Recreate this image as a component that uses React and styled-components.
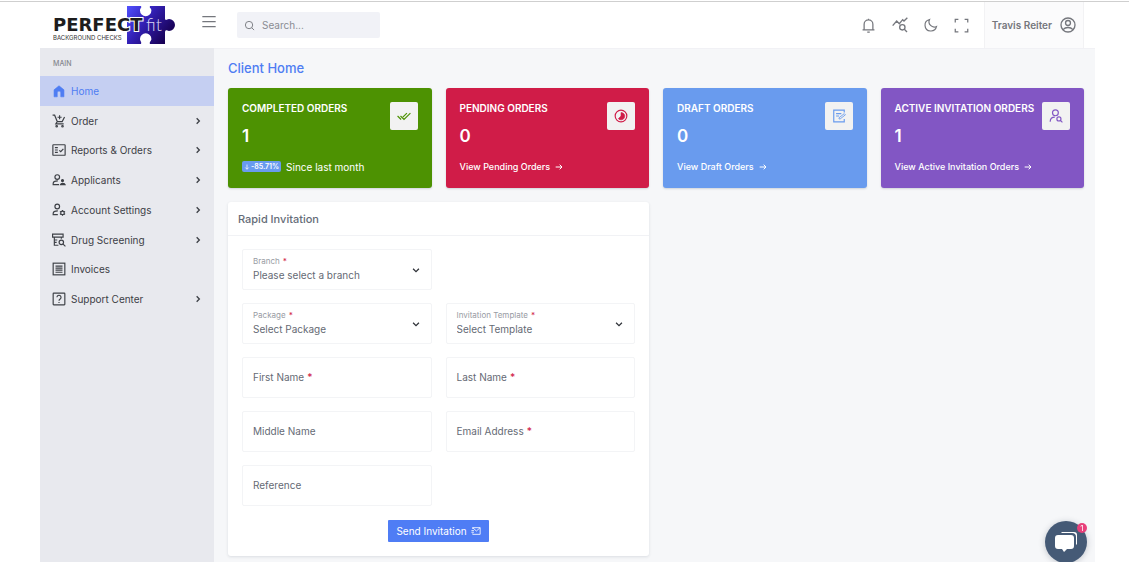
import React from "react";
import styled, { createGlobalStyle } from "styled-components";

const GlobalStyle = createGlobalStyle`
  *, *::before, *::after { box-sizing: border-box; }
  body {
    margin: 0;
    background: #fff;
    color: #3d4148;
    font-family: Inter, "Liberation Sans", sans-serif;
    font-size: 10px;
    line-height: 14px;
  }
  button, input, select { font: inherit; color: inherit; }
  h1, h2, h3, p, ul { margin: 0; padding: 0; }
  a { color: inherit; text-decoration: none; }
`;

const Page = styled.div`
  display: flex;
  flex-direction: column;
  min-height: 100vh;
  padding: 0 34px 0 40px;
`;

const TopLine = styled.div`
  height: 2px;
  margin: 0 -34px 0 -40px;
  border-bottom: 1px solid #cfcfcf;
`;

const Header = styled.header`
  display: flex;
  align-items: center;
  height: 46px;
  padding: 0 11px 0 13px;
`;

const LogoLink = styled.a`
  display: block;
  width: 124px;
  height: 40px;
`;

const IconButton = styled.button`
  display: grid;
  place-items: center;
  width: 16px;
  height: 16px;
  padding: 0;
  border: 0;
  background: none;
  color: #75777d;
`;

const MenuButton = styled(IconButton)`
  margin: 0 20px 6px 24px;
`;

const SearchBox = styled.label`
  display: flex;
  align-items: center;
  gap: 7px;
  width: 143px;
  height: 26px;
  padding: 0 7px;
  border-radius: 2px;
  background: #f1f2f7;
  color: #75777d;
`;

const SearchInput = styled.input`
  min-width: 0;
  flex: 1;
  padding: 0;
  border: 0;
  outline: 0;
  background: none;
  &::placeholder { color: #8a8c93; opacity: 1; }
`;

const Tools = styled.div`
  display: flex;
  align-items: center;
  gap: 15px;
  margin-left: auto;
  padding-right: 14px;
`;

const UserButton = styled.button`
  display: flex;
  align-items: center;
  align-self: stretch;
  gap: 8px;
  padding: 0 7px;
  border: 0;
  border-left: 1px solid #f2f2f4;
  border-right: 1px solid #f2f2f4;
  background: #fbfbfc;
  color: #75777d;
  font-weight: 600;
`;

const Body = styled.div`
  display: flex;
  flex: 1;
`;

const Sidebar = styled.nav`
  flex: 0 0 174px;
  background: #e8e9ee;
`;

const NavTitle = styled.h2`
  height: 28px;
  padding: 2px 13px 0;
  color: #85878d;
  font-size: 7px;
  font-weight: 500;
  line-height: 28px;
`;

const NavList = styled.ul`
  display: grid;
  grid-auto-rows: 1fr;
  height: 238px;
  list-style: none;
`;

const NavLink = styled.a`
  display: flex;
  align-items: center;
  gap: 5px;
  height: 100%;
  padding: 0 12px;
  background: ${(p) => (p.$active ? "#c5cff2" : "transparent")};
  color: ${(p) => (p.$active ? "#4f7df3" : "#3d4046")};
`;

const NavText = styled.span`
  flex: 1;
`;

const Main = styled.main`
  flex: 1;
  min-width: 0;
  padding: 10px 11px 6px 14px;
  background: #f6f7f9;
  border-top: 1px solid #f1f1f5;
`;

const PageTitle = styled.h1`
  margin-bottom: 11px;
  color: #4f7df3;
  font-size: 13px;
  font-weight: 500;
  line-height: 18px;
`;

const Grid = styled.div`
  display: grid;
  grid-template-columns: repeat(4, minmax(0, 1fr));
  gap: 14px;
`;

const StatCard = styled.section`
  display: flex;
  justify-content: space-between;
  height: 100px;
  padding: 14px;
  border-radius: 3px;
  background: ${(p) => p.$color};
  color: #fff;
  box-shadow: 0 1px 2px rgba(60, 70, 90, 0.2);
`;

const StatText = styled.div`
  display: flex;
  flex-direction: column;
  white-space: nowrap;
  min-width: 0;
`;

const StatTitle = styled.h2`
  font-size: 10px;
  font-weight: 600;
  line-height: 12px;
`;

const StatValue = styled.p`
  margin: 11px 0 12px;
  font-size: 17px;
  font-weight: 600;
  line-height: 22px;
`;

const StatFoot = styled.div`
  display: flex;
  align-items: center;
  gap: 5px;
  height: 18px;
`;

const StatLink = styled.a`
  display: flex;
  align-items: center;
  gap: 5px;
  font-size: 9px;
  font-weight: 500;
`;

const Trend = styled.span`
  display: flex;
  align-items: center;
  gap: 1px;
  height: 11px;
  padding: 0 2px;
  border-radius: 2px;
  background: #699bee;
  font-size: 7px;
  font-weight: 600;
  line-height: 11px;
`;

const StatIcon = styled.div`
  display: grid;
  place-items: center;
  flex: 0 0 28px;
  height: 28px;
  border-radius: 2px;
  background: #f2f2f2;
  color: ${(p) => p.$color};
`;

const FormCard = styled.form`
  grid-column: span 2;
  border-radius: 3px;
  background: #fff;
  box-shadow: 0 1px 3px rgba(60, 70, 90, 0.14);
`;

const FormTitle = styled.h2`
  height: 34px;
  padding: 0 10px;
  border-bottom: 1px solid #f1f2f5;
  color: #656c78;
  font-size: 11px;
  font-weight: 500;
  line-height: 34px;
`;

const Fields = styled.div`
  display: grid;
  grid-template-columns: repeat(2, minmax(0, 1fr));
  gap: 13px 14px;
  padding: 13px 14px 14px;
`;

const FieldBox = styled.div`
  display: grid;
  grid-column-start: ${(p) => (p.$first ? 1 : "auto")};
  position: relative;
  height: 41px;
  border: 1px solid #f3f4f6;
  border-radius: 2px;
  color: #656a74;
`;

const Control = styled.input`
  grid-area: 1 / 1;
  width: 100%;
  min-width: 0;
  padding: ${(p) => (p.as === "select" ? "11px 24px 0 10px" : "0 10px")};
  border: 0;
  background: transparent;
  appearance: none;
`;

const FieldLabel = styled.label`
  grid-area: 1 / 1;
  align-self: ${(p) => (p.$small ? "start" : "center")};
  padding: ${(p) => (p.$small ? "5px 10px 0" : "0 10px")};
  color: ${(p) => (p.$small ? "#989ba3" : "#656a74")};
  font-size: ${(p) => (p.$small ? "8px" : "10px")};
  line-height: 13px;
  pointer-events: none;
`;

const Star = styled.span`
  margin-left: 3px;
  color: #d11f4b;
  font-weight: 500;
`;

const FieldChevron = styled.span`
  position: absolute;
  top: 15px;
  right: 10px;
  display: flex;
  color: #2f3238;
  pointer-events: none;
`;

const FormActions = styled.div`
  display: flex;
  justify-content: center;
  padding-bottom: 14px;
`;

const SubmitButton = styled.button`
  display: flex;
  align-items: center;
  gap: 4px;
  height: 22px;
  padding: 0 8px;
  border: 0;
  border-radius: 1px;
  background: #4f7df5;
  color: #fff;
`;

const ChatButton = styled.button`
  position: fixed;
  right: 42px;
  bottom: -1px;
  display: grid;
  place-items: center;
  width: 42px;
  height: 42px;
  padding: 0;
  border: 0;
  border-radius: 50%;
  background: #455a76;
  color: #fff;
  box-shadow: 0 1px 6px rgba(40, 50, 70, 0.25);
`;

const ChatBadge = styled.span`
  position: absolute;
  top: 2px;
  right: 0;
  width: 10px;
  height: 10px;
  border-radius: 50%;
  background: #e8407a;
  font-size: 8px;
  line-height: 10px;
  text-align: center;
`;

const shapes = {
  menu: <path d="M2 4h20M2 11.500h20M2 19h20" />,
  search: <><circle cx="11" cy="11" r="8" /><path d="m17 17 5 5" /></>,
  bell: <path d="M5 19V10a7 7 0 0 1 14 0v9M2.500 19h19M12 3V1M10 22.500h4" />,
  stats: <><path d="m1 13 6-7 4 4 5-6 2 2 5-5" /><circle cx="15.500" cy="15.500" r="4" /><path d="m18.500 18.500 4 4" /></>,
  moon: <path d="M9.500 2.500a10 10 0 1 0 12 12A9 9 0 0 1 9.500 2.500Z" />,
  expand: <path d="M2 7V2h5M17 2h5v5M22 17v5h-5M7 22H2v-5" />,
  user: <><circle cx="12" cy="12" r="10.500" /><circle cx="12" cy="9" r="3.700" /><path d="M4.500 19c4-4.300 11-4.300 15 0" /></>,
  home: <path d="M3.500 10 12 3l8.500 7v12H15v-7a3 3 0 0 0-6 0v7H3.500Z" fill="currentColor" strokeWidth="1" />,
  cart: <><path d="M1 2h3.500l4.500 11h8.500L21.500 5M9 13l-2.500 4H20M13 2v7M9.500 5.500h7" /><circle cx="8" cy="21" r="1.300" /><circle cx="18" cy="21" r="1.300" /></>,
  report: <><rect x="1.500" y="3" width="21" height="18" rx="1" /><path d="M5 8h5M5 12h5M5 16h5M12.500 12.500l2.500 2.500 4.500-5" /></>,
  people: <><circle cx="9" cy="7" r="4" /><path d="M12 20H2v-2c0-3 4-4.500 8-4.500" /><circle cx="18" cy="13" r="1.700" fill="currentColor" /><path d="M14.500 20h8c-1-3-7-3-8 0Z" fill="currentColor" /></>,
  settings: <><circle cx="9" cy="6" r="4" /><path d="M10 20H2v-2c0-3 4-4.500 8-4.500" /><circle cx="18" cy="17" r="3" /><path d="M18 12v2M18 20v2M13.600 14.500l1.800 1M20.600 18.500l1.800 1M13.600 19.500l1.800-1M20.600 15.500l1.800-1" /></>,
  drug: <><path d="M1 2h18v5H1ZM4 7v14h7M16 7v3M4 12h5M4 16h4" /><circle cx="16" cy="16" r="3.800" /><path d="m19 19 4 4" /></>,
  invoice: <><rect x="2" y="2" width="20" height="20" /><path d="M6 7h12M6 10.500h12M6 14h12M6 17.500h12" /></>,
  help: <><rect x="2" y="2" width="20" height="20" rx="1" /><path d="M8.500 9a3.500 3.500 0 1 1 5.500 3c-1.500 1-2 1.500-2 3M12 17v2" /></>,
  right: <path d="m8 4 8 8-8 8" />,
  down: <path d="m5 9 7 7 7-7" />,
  arrow: <path d="M2 12h19M14 5l7 7-7 7" />,
  arrowDown: <path d="M12 2v19M5 14l7 7 7-7" />,
  checks: <path d="m1 12 6 6M6 12l6 6L23 7M10 14l7-7" />,
  timer: <><circle cx="12" cy="12" r="10" /><path d="M12 6v6l-4.500 4.500A6.300 6.300 0 1 0 12 6Z" fill="currentColor" strokeWidth="1" /></>,
  draft: <><path d="M21 6V2H3v20h18v-5M7 8h9M7 12h5" /><path d="M12 17v-2l9-7 2 2-9 7Z" strokeWidth="1.500" /></>,
  personSearch: <><circle cx="11" cy="6.500" r="5" /><path d="M2 22c0-5 3-8 8-8" /><circle cx="17" cy="17" r="3.500" /><path d="m19.500 19.500 3.500 3.500" /></>,
  mail: <path d="M4 7V4h18v16H4v-2M4 4l9 8 9-8M1 11h6M1 15h6" />,
};

function Icon({ name, size = 14, weight = 2 }) {
  return (
    <svg width={size} height={size} viewBox="0 0 24 24" fill="none" stroke="currentColor" strokeWidth={weight} aria-hidden="true">
      {shapes[name]}
    </svg>
  );
}

function Logo() {
  return (
    <svg width="124" height="40" viewBox="0 0 124 40">
      <defs>
        <linearGradient id="puzzle" x1="0" y1="0" x2="1" y2="0.6">
          <stop offset="0" stopColor="#5151ff" />
          <stop offset="0.450" stopColor="#3320b5" />
          <stop offset="1" stopColor="#170052" />
        </linearGradient>
      </defs>
      <path
        d="M74 1H88C89 3 87 3 87 5.500A5.700 5.700 0 0 0 98.400 5.500C98.400 3 96 3 97 1H112V14C113 16 114 14 116 14A6 6 0 0 1 116 26C114 26 113 24 112 27V39H97C96 37 98.400 36 98.400 34A5.700 5.700 0 0 0 87 34C87 36 89 37 88 39H74Z"
        fill="url(#puzzle)"
      />
      <text x="0" y="26" fontFamily="DejaVu Sans, sans-serif" fontSize="18" fontWeight="700" fill="#1d1d1d" stroke="#fff" strokeWidth="2" paintOrder="stroke">PERFECT</text>
      <text x="93" y="26" fontFamily="Lato, sans-serif" fontSize="18" fontWeight="300" fill="#d9d5f5">fit</text>
      <text x="0" y="35" fontFamily="Inter, sans-serif" fontSize="6" fill="#333">BACKGROUND CHECKS</text>
    </svg>
  );
}

const navItems = [
  { icon: "home", text: "Home", active: true },
  { icon: "cart", text: "Order", more: true },
  { icon: "report", text: "Reports & Orders", more: true },
  { icon: "people", text: "Applicants", more: true },
  { icon: "settings", text: "Account Settings", more: true },
  { icon: "drug", text: "Drug Screening", more: true },
  { icon: "invoice", text: "Invoices" },
  { icon: "help", text: "Support Center", more: true },
];

const stats = [
  { title: "COMPLETED ORDERS", value: 1, color: "#4d9202", icon: "checks", trend: "-85.71%" },
  { title: "PENDING ORDERS", value: 0, color: "#d01c48", icon: "timer", link: "View Pending Orders" },
  { title: "DRAFT ORDERS", value: 0, color: "#699bee", icon: "draft", link: "View Draft Orders" },
  { title: "ACTIVE INVITATION ORDERS", value: 1, color: "#8256c4", icon: "personSearch", link: "View Active Invitation Orders" },
];

const fields = [
  { id: "branch", label: "Branch", required: true, option: "Please select a branch" },
  { id: "package", label: "Package", required: true, option: "Select Package", first: true },
  { id: "template", label: "Invitation Template", required: true, option: "Select Template" },
  { id: "first", label: "First Name", required: true },
  { id: "last", label: "Last Name", required: true },
  { id: "middle", label: "Middle Name" },
  { id: "email", label: "Email Address", required: true },
  { id: "reference", label: "Reference" },
];

function Field({ id, label, required, option, first }) {
  return (
    <FieldBox $first={first}>
      {option ? (
        <Control as="select" id={id}><option>{option}</option></Control>
      ) : (
        <Control id={id} type="text" />
      )}
      <FieldLabel htmlFor={id} $small={Boolean(option)}>
        {label}{required && <Star>*</Star>}
      </FieldLabel>
      {option && <FieldChevron><Icon name="down" size={10} weight={3} /></FieldChevron>}
    </FieldBox>
  );
}

export default function App() {
  return (
    <>
      <GlobalStyle />
      <Page>
        <TopLine />
        <Header>
          <LogoLink href="#" aria-label="Perfect Fit Background Checks"><Logo /></LogoLink>
          <MenuButton aria-label="Toggle menu"><Icon name="menu" size={16} /></MenuButton>
          <SearchBox>
            <Icon name="search" size={11} />
            <SearchInput type="search" placeholder="Search..." aria-label="Search" />
          </SearchBox>
          <Tools>
            <IconButton aria-label="Notifications"><Icon name="bell" size={15} /></IconButton>
            <IconButton aria-label="Statistics"><Icon name="stats" size={16} /></IconButton>
            <IconButton aria-label="Dark mode"><Icon name="moon" size={14} /></IconButton>
            <IconButton aria-label="Full screen"><Icon name="expand" size={15} /></IconButton>
          </Tools>
          <UserButton>Travis Reiter<Icon name="user" size={16} /></UserButton>
        </Header>
        <Body>
          <Sidebar>
            <NavTitle>MAIN</NavTitle>
            <NavList>
              {navItems.map((item) => (
                <li key={item.text}>
                  <NavLink href="#" $active={item.active}>
                    <Icon name={item.icon} />
                    <NavText>{item.text}</NavText>
                    {item.more && <Icon name="right" size={8} weight={4} />}
                  </NavLink>
                </li>
              ))}
            </NavList>
          </Sidebar>
          <Main>
            <PageTitle>Client Home</PageTitle>
            <Grid>
              {stats.map((s) => (
                <StatCard key={s.title} $color={s.color}>
                  <StatText>
                    <StatTitle>{s.title}</StatTitle>
                    <StatValue>{s.value}</StatValue>
                    <StatFoot>
                      {s.trend && <><Trend><Icon name="arrowDown" size={6} weight={3} />{s.trend}</Trend>Since last month</>}
                      {s.link && <StatLink href="#">{s.link}<Icon name="arrow" size={8} weight={3} /></StatLink>}
                    </StatFoot>
                  </StatText>
                  <StatIcon $color={s.color}><Icon name={s.icon} /></StatIcon>
                </StatCard>
              ))}
              <FormCard onSubmit={(e) => e.preventDefault()}>
                <FormTitle>Rapid Invitation</FormTitle>
                <Fields>
                  {fields.map((f) => <Field key={f.id} {...f} />)}
                </Fields>
                <FormActions>
                  <SubmitButton type="submit">Send Invitation<Icon name="mail" size={10} /></SubmitButton>
                </FormActions>
              </FormCard>
            </Grid>
          </Main>
        </Body>
      </Page>
      <ChatButton aria-label="Open chat, 1 unread">
        <svg width="24" height="24" viewBox="0 0 24 24" fill="currentColor" aria-hidden="true">
          <path d="M8 2h12a3 3 0 0 1 3 3v9l-1 1V7a4 4 0 0 0-4-4H7Z" />
          <path d="M4 5h13a3 3 0 0 1 3 3v8a3 3 0 0 1-3 3h-4l-3 3-2-3H4a3 3 0 0 1-3-3V8a3 3 0 0 1 3-3Z" />
        </svg>
        <ChatBadge>1</ChatBadge>
      </ChatButton>
    </>
  );
}
